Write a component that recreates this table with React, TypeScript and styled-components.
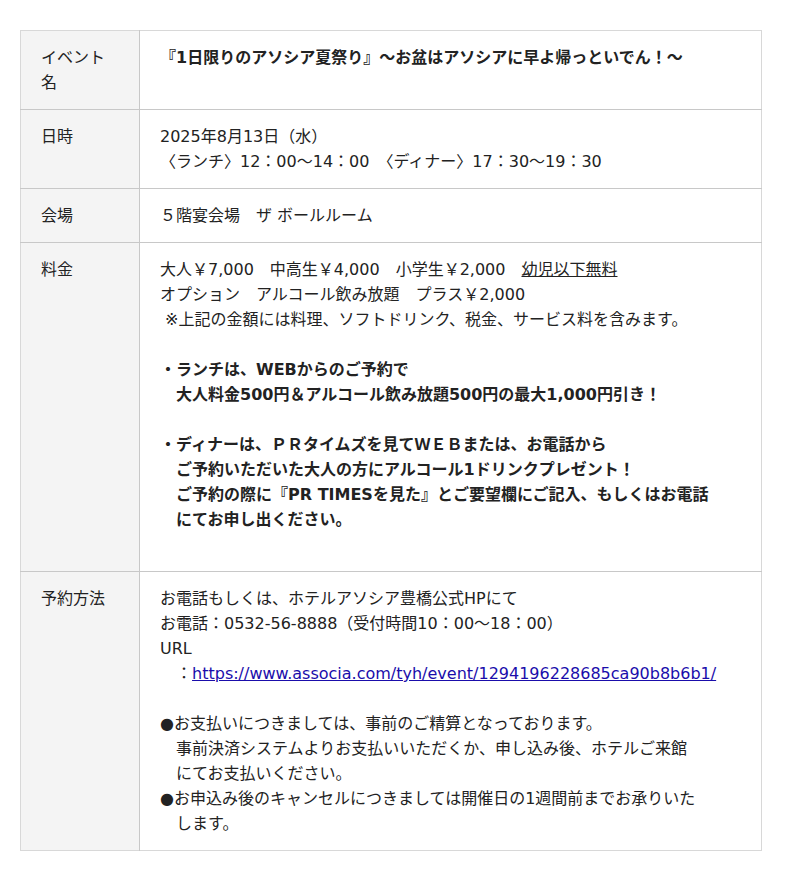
import styled, { createGlobalStyle } from 'styled-components';

const GlobalStyle = createGlobalStyle`
  body {
    margin: 0;
    background: #fff;
    color: #222;
    font-family: "DejaVu Sans", "Noto Sans CJK JP", sans-serif;
    font-size: 16px;
    line-height: 25px;
  }
`;

const Page = styled.div`
  padding: 30px 0 30px 20px;
`;

const Table = styled.table`
  width: 742px;
  border-collapse: collapse;
  border: 1px solid #d8d8d8;
`;

const Row = styled.tr`
  border-bottom: 1px solid #c8c8c8;
  &:last-child {
    border-bottom: 1px solid #d8d8d8;
  }
`;

const Label = styled.th`
  width: 119px;
  box-sizing: border-box;
  padding: 14px 24px 14px 20px;
  background: #f4f4f4;
  border-right: 1px solid #c8c8c8;
  font-weight: normal;
  text-align: left;
  vertical-align: top;
`;

const Value = styled.td`
  padding: 14px 20px;
  text-align: left;
  vertical-align: top;
`;

const Strong = styled.strong`
  font-weight: bold;
`;

const Under = styled.span`
  text-decoration: underline;
`;

const UrlLink = styled.a`
  color: #1a0dab;
  text-decoration: underline;
`;

// full-width space, JSX would trim it at line starts
const W = '\u3000';

export default function App() {
  return (
    <>
      <GlobalStyle />
      <Page>
        <Table>
          <tbody>
            <Row>
              <Label>イベント名</Label>
              <Value>
                <Strong>『1日限りのアソシア夏祭り』～お盆はアソシアに早よ帰っといでん！～</Strong>
              </Value>
            </Row>
            <Row>
              <Label>日時</Label>
              <Value>
                2025年8月13日（水）<br />
                〈ランチ〉12：00～14：00{W}〈ディナー〉17：30～19：30
              </Value>
            </Row>
            <Row>
              <Label>会場</Label>
              <Value>５階宴会場{W}ザ ボールルーム</Value>
            </Row>
            <Row>
              <Label>料金</Label>
              <Value>
                大人￥7,000{W}中高生￥4,000{W}小学生￥2,000{W}<Under>幼児以下無料</Under><br />
                オプション{W}アルコール飲み放題{W}プラス￥2,000<br />
                {'\u00a0'}※上記の金額には料理、ソフトドリンク、税金、サービス料を含みます。<br />
                <br />
                <Strong>
                  ・ランチは、WEBからのご予約で<br />
                  {W}大人料金500円＆アルコール飲み放題500円の最大1,000円引き！<br />
                  <br />
                  ・ディナーは、ＰＲタイムズを見てＷＥＢまたは、お電話から<br />
                  {W}ご予約いただいた大人の方にアルコール1ドリンクプレゼント！<br />
                  {W}ご予約の際に『PR TIMESを見た』とご要望欄にご記入、もしくはお電話<br />
                  {W}にてお申し出ください。
                </Strong>
                <br />
                <br />
              </Value>
            </Row>
            <Row>
              <Label>予約方法</Label>
              <Value>
                お電話もしくは、ホテルアソシア豊橋公式HPにて<br />
                お電話：0532-56-8888（受付時間10：00～18：00）<br />
                URL<br />
                {W}：<UrlLink href="#">https://www.associa.com/tyh/event/1294196228685ca90b8b6b1/</UrlLink><br />
                <br />
                ●お支払いにつきましては、事前のご精算となっております。<br />
                {W}事前決済システムよりお支払いいただくか、申し込み後、ホテルご来館<br />
                {W}にてお支払いください。<br />
                ●お申込み後のキャンセルにつきましては開催日の1週間前までお承りいた<br />
                {W}します。
              </Value>
            </Row>
          </tbody>
        </Table>
      </Page>
    </>
  );
}
